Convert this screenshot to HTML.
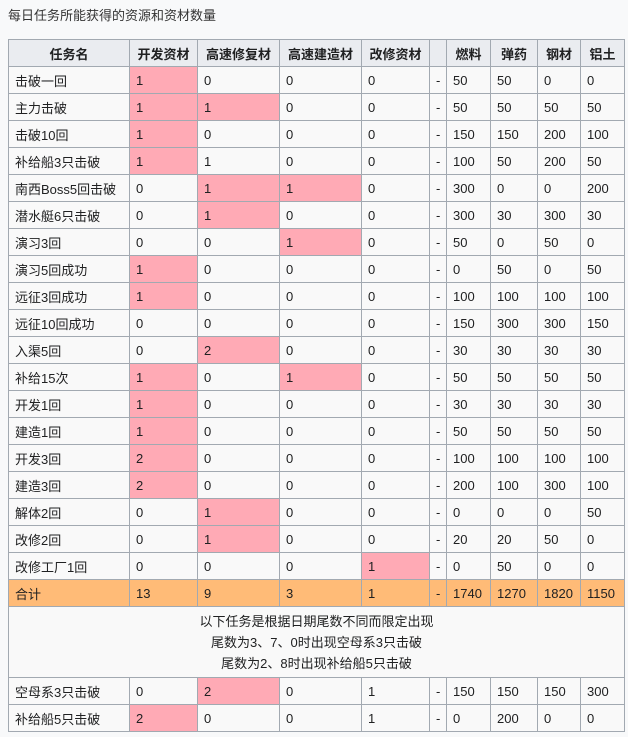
<!DOCTYPE html><html><head><meta charset="utf-8"><style>
body{margin:0;background:#f8f9fa;font-family:"Liberation Sans","Noto Sans CJK SC",sans-serif;font-size:13px;color:#202122;width:628px;height:737px;overflow:hidden}
.cap{position:absolute;left:8px;top:5px;font-size:13px;color:#333}
table{position:absolute;left:8px;top:39px;border-collapse:collapse;table-layout:fixed;width:616px}
td,th{border:1px solid #a2a9b1;padding:0 0 0 6px;height:26px;text-align:left;white-space:nowrap;overflow:hidden;background:#f9f9f9}
th{background:#eaecf0;font-weight:bold;text-align:center;padding:0;height:26px}
.p{background:#ffaab5}
tr.t td{background:#ffbb77}
td.n{text-align:center;padding:0;height:70px;line-height:21px}
</style></head><body>
<div class="cap">每日任务所能获得的资源和资材数量</div>
<table>
<colgroup><col style="width:121px"><col style="width:68px"><col style="width:82px"><col style="width:82px"><col style="width:68px"><col style="width:17px"><col style="width:44px"><col style="width:47px"><col style="width:43px"><col style="width:44px"></colgroup>
<tr><th>任务名</th><th>开发资材</th><th>高速修复材</th><th>高速建造材</th><th>改修资材</th><th></th><th>燃料</th><th>弹药</th><th>钢材</th><th>铝土</th></tr>
<tr><td>击破一回</td><td class="p">1</td><td>0</td><td>0</td><td>0</td><td>-</td><td>50</td><td>50</td><td>0</td><td>0</td></tr>
<tr><td>主力击破</td><td class="p">1</td><td class="p">1</td><td>0</td><td>0</td><td>-</td><td>50</td><td>50</td><td>50</td><td>50</td></tr>
<tr><td>击破10回</td><td class="p">1</td><td>0</td><td>0</td><td>0</td><td>-</td><td>150</td><td>150</td><td>200</td><td>100</td></tr>
<tr><td>补给船3只击破</td><td class="p">1</td><td>1</td><td>0</td><td>0</td><td>-</td><td>100</td><td>50</td><td>200</td><td>50</td></tr>
<tr><td>南西Boss5回击破</td><td>0</td><td class="p">1</td><td class="p">1</td><td>0</td><td>-</td><td>300</td><td>0</td><td>0</td><td>200</td></tr>
<tr><td>潜水艇6只击破</td><td>0</td><td class="p">1</td><td>0</td><td>0</td><td>-</td><td>300</td><td>30</td><td>300</td><td>30</td></tr>
<tr><td>演习3回</td><td>0</td><td>0</td><td class="p">1</td><td>0</td><td>-</td><td>50</td><td>0</td><td>50</td><td>0</td></tr>
<tr><td>演习5回成功</td><td class="p">1</td><td>0</td><td>0</td><td>0</td><td>-</td><td>0</td><td>50</td><td>0</td><td>50</td></tr>
<tr><td>远征3回成功</td><td class="p">1</td><td>0</td><td>0</td><td>0</td><td>-</td><td>100</td><td>100</td><td>100</td><td>100</td></tr>
<tr><td>远征10回成功</td><td>0</td><td>0</td><td>0</td><td>0</td><td>-</td><td>150</td><td>300</td><td>300</td><td>150</td></tr>
<tr><td>入渠5回</td><td>0</td><td class="p">2</td><td>0</td><td>0</td><td>-</td><td>30</td><td>30</td><td>30</td><td>30</td></tr>
<tr><td>补给15次</td><td class="p">1</td><td>0</td><td class="p">1</td><td>0</td><td>-</td><td>50</td><td>50</td><td>50</td><td>50</td></tr>
<tr><td>开发1回</td><td class="p">1</td><td>0</td><td>0</td><td>0</td><td>-</td><td>30</td><td>30</td><td>30</td><td>30</td></tr>
<tr><td>建造1回</td><td class="p">1</td><td>0</td><td>0</td><td>0</td><td>-</td><td>50</td><td>50</td><td>50</td><td>50</td></tr>
<tr><td>开发3回</td><td class="p">2</td><td>0</td><td>0</td><td>0</td><td>-</td><td>100</td><td>100</td><td>100</td><td>100</td></tr>
<tr><td>建造3回</td><td class="p">2</td><td>0</td><td>0</td><td>0</td><td>-</td><td>200</td><td>100</td><td>300</td><td>100</td></tr>
<tr><td>解体2回</td><td>0</td><td class="p">1</td><td>0</td><td>0</td><td>-</td><td>0</td><td>0</td><td>0</td><td>50</td></tr>
<tr><td>改修2回</td><td>0</td><td class="p">1</td><td>0</td><td>0</td><td>-</td><td>20</td><td>20</td><td>50</td><td>0</td></tr>
<tr><td>改修工厂1回</td><td>0</td><td>0</td><td>0</td><td class="p">1</td><td>-</td><td>0</td><td>50</td><td>0</td><td>0</td></tr>
<tr class="t"><td>合计</td><td>13</td><td>9</td><td>3</td><td>1</td><td>-</td><td>1740</td><td>1270</td><td>1820</td><td>1150</td></tr>
<tr><td class="n" colspan="10">以下任务是根据日期尾数不同而限定出现<br>尾数为3、7、0时出现空母系3只击破<br>尾数为2、8时出现补给船5只击破</td></tr>
<tr><td>空母系3只击破</td><td>0</td><td class="p">2</td><td>0</td><td>1</td><td>-</td><td>150</td><td>150</td><td>150</td><td>300</td></tr>
<tr><td>补给船5只击破</td><td class="p">2</td><td>0</td><td>0</td><td>1</td><td>-</td><td>0</td><td>200</td><td>0</td><td>0</td></tr>
</table>
</body></html>
